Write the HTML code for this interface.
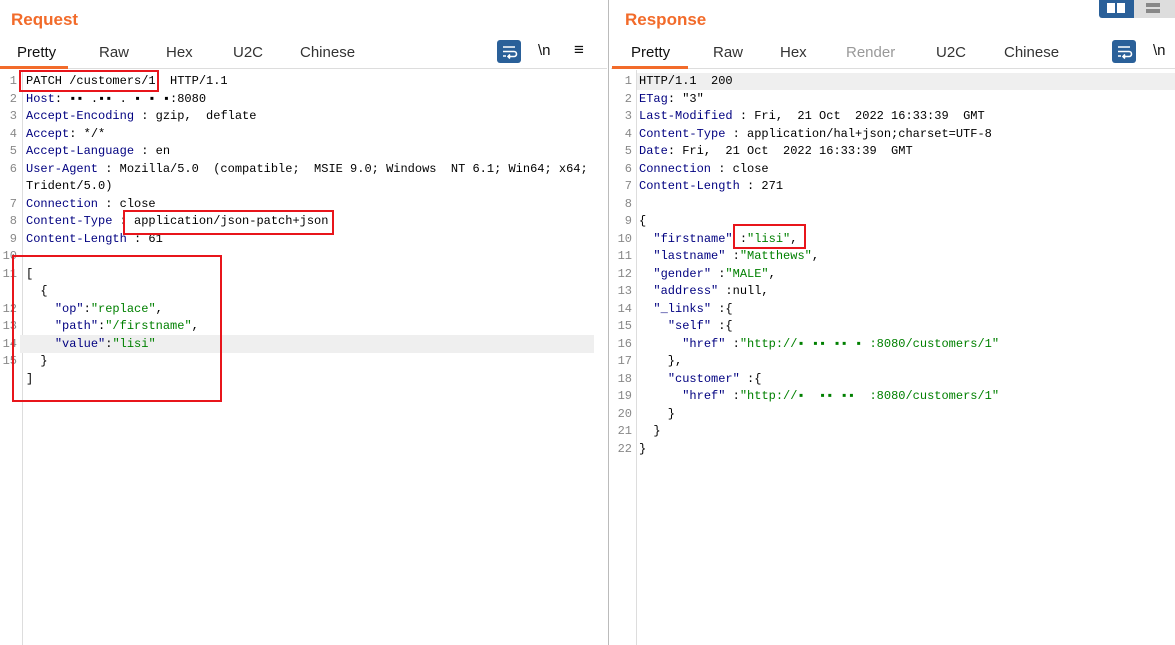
<!DOCTYPE html>
<html><head><meta charset="utf-8"><style>
*{margin:0;padding:0;box-sizing:border-box}
body{width:1175px;height:645px;background:#fff;position:relative;overflow:hidden;font-family:"Liberation Sans","Noto Sans CJK SC",sans-serif}
.a{position:absolute;white-space:pre}
.h{font-weight:bold;color:#f26b2a;font-size:17px}
.t{font-size:15px;color:#333;top:44px}
.l{font-family:"Liberation Mono","Noto Sans CJK SC",monospace;font-size:12px;line-height:17.5px;color:#000}
.n{font-family:"Liberation Mono",monospace;font-size:12px;line-height:17.5px;color:#888;text-align:right}
.k{color:#000080}.s{color:#008000}
.r{position:absolute;border:2px solid #e8151b}
</style></head><body>
<div class="a" style="left:608px;top:0;width:1px;height:645px;background:#bbb"></div>
<div class="a" style="left:0;top:68px;width:607px;height:1px;background:#ddd"></div>
<div class="a" style="left:611px;top:68px;width:564px;height:1px;background:#ddd"></div>
<div class="a" style="left:0;top:66px;width:68px;height:3px;background:#f26b2a"></div>
<div class="a" style="left:612px;top:66px;width:76px;height:3px;background:#f26b2a"></div>
<div class="a" style="left:22px;top:70px;width:1px;height:575px;background:#ddd"></div>
<div class="a" style="left:636px;top:70px;width:1px;height:575px;background:#ddd"></div>
<div class="a" style="left:20px;top:335px;width:574px;height:18px;background:#efefef"></div>
<div class="a" style="left:637px;top:73px;width:538px;height:17px;background:#efefef"></div>
<div class="a h" style="left:11px;top:10px">Request</div>
<div class="a h" style="left:625px;top:10px">Response</div>
<div class="a t" style="left:17px;color:#111">Pretty</div>
<div class="a t" style="left:99px">Raw</div>
<div class="a t" style="left:166px">Hex</div>
<div class="a t" style="left:233px">U2C</div>
<div class="a t" style="left:300px">Chinese</div>
<div class="a t" style="left:631px;color:#111">Pretty</div>
<div class="a t" style="left:713px">Raw</div>
<div class="a t" style="left:780px">Hex</div>
<div class="a t" style="left:846px;color:#999">Render</div>
<div class="a t" style="left:936px">U2C</div>
<div class="a t" style="left:1004px">Chinese</div>
<svg class="a" style="left:497px;top:40px" width="24" height="23"><rect width="24" height="23" rx="3" fill="#2a6099"/><path d="M6 7h12M6 11.5h11a2.5 2.5 0 0 1 0 5h-5M13 14.5l-2 2 2 2M6 16h3" stroke="#fff" stroke-width="1.6" fill="none"/></svg>
<div class="a" style="left:538px;top:42px;font-size:15px;color:#111">\n</div>
<div class="a" style="left:574px;top:40px;font-size:17px;color:#111">≡</div>
<svg class="a" style="left:1112px;top:40px" width="24" height="23"><rect width="24" height="23" rx="3" fill="#2a6099"/><path d="M6 7h12M6 11.5h11a2.5 2.5 0 0 1 0 5h-5M13 14.5l-2 2 2 2M6 16h3" stroke="#fff" stroke-width="1.6" fill="none"/></svg>
<div class="a" style="left:1153px;top:42px;font-size:15px;color:#111">\n</div>
<div class="a" style="left:1099px;top:0;width:35px;height:18px;background:#2a6099;border-radius:0 0 0 3px"></div>
<div class="a" style="left:1107px;top:3px;width:8px;height:10px;background:#fff"></div>
<div class="a" style="left:1117px;top:3px;width:8px;height:10px;background:#fff"></div>
<div class="a" style="left:1134px;top:0;width:41px;height:18px;background:#ddd"></div>
<div class="a" style="left:1146px;top:3px;width:14px;height:4px;background:#888"></div>
<div class="a" style="left:1146px;top:9px;width:14px;height:4px;background:#888"></div>
<div class="a n" style="left:0;width:17px;top:73px">1
2
3
4
5
6

7
8
9
10
11</div>
<div class="a n" style="left:0;width:17px;top:300.5px">12
13
14
15</div>
<div class="a l" style="left:26px;top:73px">PATCH /customers/1  HTTP/1.1
<span class="k">Host</span>: ▪▪ .▪▪ . ▪ ▪ ▪:8080
<span class="k">Accept-Encoding</span> : gzip,  deflate
<span class="k">Accept</span>: */*
<span class="k">Accept-Language</span> : en
<span class="k">User-Agent</span> : Mozilla/5.0  (compatible;  MSIE 9.0; Windows  NT 6.1; Win64; x64;
Trident/5.0)
<span class="k">Connection</span> : close
<span class="k">Content-Type</span> : application/json-patch+json
<span class="k">Content-Length</span> : 61

[
  {</div>
<div class="a l" style="left:26px;top:300.5px">    <span class="k">"op"</span>:<span class="s">"replace"</span>,
    <span class="k">"path"</span>:<span class="s">"/firstname"</span>,
    <span class="k">"value"</span>:<span class="s">"lisi"</span>
  }
]</div>
<div class="a n" style="left:612px;width:20px;top:73px">1
2
3
4
5
6
7
8
9
10
11
12
13
14
15
16
17
18
19
20
21
22</div>
<div class="a l" style="left:639px;top:73px">HTTP/1.1  200
<span class="k">ETag</span>: "3"
<span class="k">Last-Modified</span> : Fri,  21 Oct  2022 16:33:39  GMT
<span class="k">Content-Type</span> : application/hal+json;charset=UTF-8
<span class="k">Date</span>: Fri,  21 Oct  2022 16:33:39  GMT
<span class="k">Connection</span> : close
<span class="k">Content-Length</span> : 271

{
  <span class="k">"firstname"</span> :<span class="s">"lisi"</span>,
  <span class="k">"lastname"</span> :<span class="s">"Matthews"</span>,
  <span class="k">"gender"</span> :<span class="s">"MALE"</span>,
  <span class="k">"address"</span> :null,
  <span class="k">"_links"</span> :{
    <span class="k">"self"</span> :{
      <span class="k">"href"</span> :<span class="s">"http://▪ ▪▪ ▪▪ ▪ :8080/customers/1"</span>
    },
    <span class="k">"customer"</span> :{
      <span class="k">"href"</span> :<span class="s">"http://▪  ▪▪ ▪▪  :8080/customers/1"</span>
    }
  }
}</div>
<div class="r" style="left:19px;top:70px;width:140px;height:22px"></div>
<div class="r" style="left:123px;top:210px;width:211px;height:25px"></div>
<div class="r" style="left:12px;top:255px;width:210px;height:147px"></div>
<div class="r" style="left:733px;top:224px;width:73px;height:25px"></div>
</body></html>
